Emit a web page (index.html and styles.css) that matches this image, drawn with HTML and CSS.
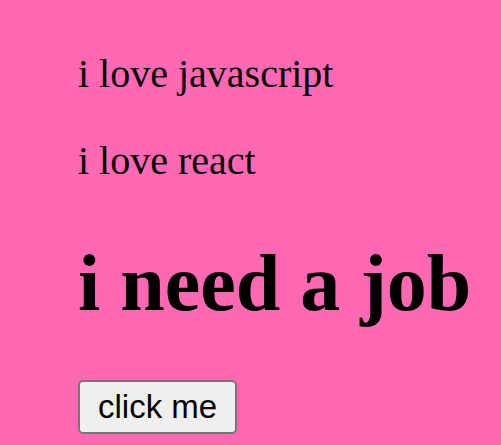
FILE: index.html
```html
<!DOCTYPE html>
<html>
<head>
<meta charset="utf-8">
<link rel="stylesheet" href="styles.css">
</head>
<body>
<div class="page">
  <p class="line">i love javascript</p>
  <p class="line">i love react</p>
  <h1 class="title">i need a job</h1>
  <button class="btn">click me</button>
</div>
</body>
</html>
```

FILE: styles.css
```css
html, body {
  margin: 0;
  padding: 0;
  background: #ff69b4;
}
.page {
  padding: 10px 0 0 78px;
  font-family: "Liberation Serif", "Times New Roman", serif;
  color: #000;
}
.line {
  font-size: 40px;
  margin: 40px 0;
}
.title {
  font-size: 80px;
  font-weight: bold;
  margin: 54px 0 51px;
}
.btn {
  font-family: "Liberation Sans", Arial, sans-serif;
  font-size: 33px;
  color: #000;
  background: #efefef;
  border: 2px solid #767676;
  border-radius: 5px;
  padding: 6px 18px;
}
```
